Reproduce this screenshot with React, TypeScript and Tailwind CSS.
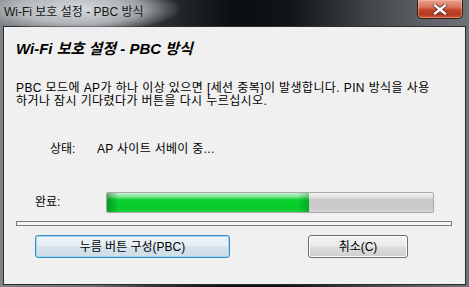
import React from "react";

export default function App() {
  const font = "font-['Liberation_Sans','Noto_Sans_CJK_KR',sans-serif]";
  return (
    <div
      className={`relative w-[469px] h-[287px] overflow-hidden flex flex-col ${font} bg-[linear-gradient(90deg,#7e8388_0%,#6a6e73_20%,#2a2d31_35%,#0b0e11_50%,#121518_62%,#45494d_80%,#60646a_92%,#6f7378_100%)]`}
    >
      {/* Title bar */}
      <div className="relative h-[26px] shrink-0">
        <div className="absolute left-[-20px] top-[-14px] w-[200px] h-[46px] rounded-[50%] bg-[radial-gradient(ellipse_at_center,rgba(235,238,240,0.85)_0%,rgba(220,224,228,0.6)_45%,rgba(200,205,210,0)_72%)]" />
        <div className="relative pl-[4px] pt-[5px] text-[12px] leading-[14px] text-[#151515]">
          Wi-Fi 보호 설정 - PBC 방식
        </div>
        <div className="absolute left-[417px] top-0 w-[46px] h-[19px] rounded-b-[5px] border border-t-0 border-[#3b1d17] bg-[linear-gradient(180deg,#e7a593_0%,#d6725c_40%,#c3432b_55%,#b6371f_80%,#c8583c_100%)] shadow-[inset_0_0_0_1px_rgba(255,200,180,0.45)] flex items-center justify-center">
          <svg width="14" height="11" viewBox="0 0 14 11">
            <path
              d="M2 1.5 L12 9.5 M12 1.5 L2 9.5"
              stroke="#5a2418"
              strokeWidth="4"
              strokeLinecap="square"
            />
            <path
              d="M2 1.5 L12 9.5 M12 1.5 L2 9.5"
              stroke="#ffffff"
              strokeWidth="2.4"
              strokeLinecap="square"
            />
          </svg>
        </div>
      </div>

      {/* Client area */}
      <div className="mx-[3px] mb-[2px] flex-1 border border-[#2b2e31] bg-[#f0f0f0] flex flex-col text-[#000]">
        <div className="ml-[12px] mt-[13px] text-[15px] leading-[18px] font-bold italic">
          Wi-Fi 보호 설정 - PBC 방식
        </div>
        <div className="ml-[12px] mt-[24px] text-[12px] leading-[13px] tracking-[0.4px] whitespace-nowrap">
          <div>PBC 모드에 AP가 하나 이상 있으면 [세션 중복]이 발생합니다. PIN 방식을 사용</div>
          <div>하거나 잠시 기다렸다가 버튼을 다시 누르십시오.</div>
        </div>
        <div className="mt-[35px] flex items-center text-[12px] leading-[13px] pl-[46px]">
          <div className="w-[47px]">상태:</div>
          <div className="tracking-[0.3px]">AP 사이트 서베이 중...</div>
        </div>
        <div className="mt-[36px] flex items-center pl-[31px]">
          <div className="w-[71px] text-[12px] leading-[13px]">완료:</div>
          <div className="relative w-[328px] h-[21px] rounded-[2px] border border-[#a8a8a8] bg-[linear-gradient(180deg,#f3f3f3_0%,#e2e2e2_20%,#cbcbcb_35%,#c9c9c9_80%,#d6d6d6_100%)] overflow-hidden">
            <div className="absolute left-0 top-0 bottom-0 w-[202px] bg-[linear-gradient(180deg,#c6f3cf_0%,#8ae89d_18%,#0bd230_36%,#06cc2a_80%,#22d442_100%)]">
              <div className="absolute inset-0 bg-[linear-gradient(90deg,rgba(0,90,20,0.45)_0%,rgba(0,90,20,0)_6%,rgba(0,90,20,0)_94%,rgba(0,90,20,0.3)_100%)]" />
            </div>
          </div>
        </div>
        <div className="ml-[12px] mt-[8px] w-[436px] h-[5px] border border-[#7c7c7c] bg-[#f4f4f4]" />
        <div className="mt-[9px] flex text-[12px]">
          <div className="ml-[31px] w-[195px] h-[23px] rounded-[3px] border border-[#3a8fc4] shadow-[inset_0_0_0_1px_#9fd8f4] bg-[linear-gradient(180deg,#f0f5f8_0%,#e5eef3_48%,#d5e4ec_52%,#cddde6_100%)] flex items-center justify-center">
            누름 버튼 구성(PBC)
          </div>
          <div className="ml-[78px] w-[100px] h-[23px] rounded-[3px] border border-[#707070] shadow-[inset_0_0_0_1px_#fbfbfb] bg-[linear-gradient(180deg,#f2f2f2_0%,#ebebeb_48%,#dddddd_52%,#cfcfcf_100%)] flex items-center justify-center">
            취소(C)
          </div>
        </div>
      </div>
    </div>
  );
}
